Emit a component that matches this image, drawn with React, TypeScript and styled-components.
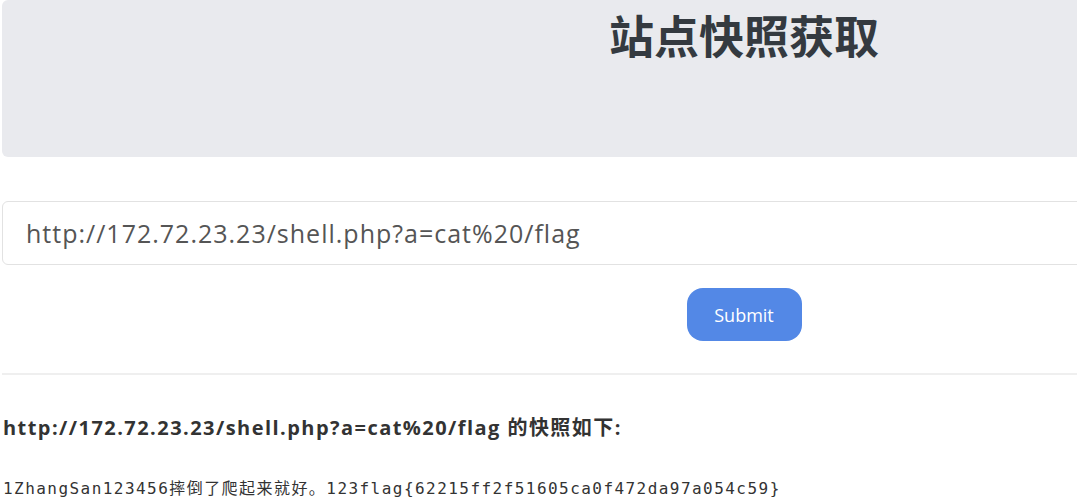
import React from "react";
import styled, { createGlobalStyle } from "styled-components";

const Global = createGlobalStyle`
  html, body { margin: 0; padding: 0; background: #ffffff; overflow: hidden; }
  body { font-family: "Open Sans", "Noto Sans CJK SC", sans-serif; color: #333; }
`;

const Viewport = styled.div`
  width: 1077px;
  overflow: hidden;
`;

const Container = styled.div`
  width: 1484px;
  margin-left: 2px;
  display: flex;
  flex-direction: column;
`;

const Jumbotron = styled.header`
  height: 157px;
  background: #e9eaee;
  border-radius: 6px;
  display: flex;
  justify-content: center;
  align-items: flex-start;
  box-sizing: border-box;
  padding-top: 5px;
`;

const Title = styled.h1`
  margin: 0;
  font-family: "Noto Sans CJK SC", sans-serif;
  font-weight: 700;
  font-size: 45px;
  line-height: 60px;
  color: #343a40;
`;

const Form = styled.form`
  margin-top: 44px;
  display: flex;
  flex-direction: column;
  align-items: center;
`;

const UrlInput = styled.input`
  width: 100%;
  height: 64px;
  box-sizing: border-box;
  border: 1px solid #e2e2e2;
  border-radius: 6px;
  padding: 0 0 0 23px;
  font-family: "Open Sans", sans-serif;
  font-size: 25px;
  letter-spacing: 1px;
  color: #555;
  background: #fff;
  outline: none;
`;

const SubmitButton = styled.button`
  margin-top: 23px;
  width: 115px;
  height: 53px;
  border: none;
  border-radius: 16px;
  background: #5388e6;
  color: #fff;
  font-family: "Open Sans", sans-serif;
  font-size: 18px;
`;

const Rule = styled.hr`
  margin: 32px 0 0;
  border: none;
  border-top: 2px solid #efefef;
  width: 100%;
`;

const ResultTitle = styled.h4`
  margin: 40px 0 0 1px;
  font-family: "Open Sans", "Noto Sans CJK SC", sans-serif;
  font-weight: 700;
  font-size: 20px;
  letter-spacing: 1.45px;
  line-height: 26px;
  color: #333;
`;

const Output = styled.pre`
  margin: 38px 0 0 1px;
  font-family: "DejaVu Sans Mono", "Noto Sans CJK SC", monospace;
  font-size: 16px;
  letter-spacing: 1.45px;
  line-height: 20px;
  color: #333;
`;

export default function App() {
  const url = "http://172.72.23.23/shell.php?a=cat%20/flag";
  return (
    <>
      <Global />
      <Viewport>
        <Container>
          <Jumbotron>
            <Title>站点快照获取</Title>
          </Jumbotron>
          <Form onSubmit={(e) => e.preventDefault()}>
            <UrlInput defaultValue={url} />
            <SubmitButton type="submit">Submit</SubmitButton>
          </Form>
          <Rule />
          <ResultTitle>{url} 的快照如下:</ResultTitle>
          <Output>1ZhangSan123456摔倒了爬起来就好。123flag{"{"}62215ff2f51605ca0f472da97a054c59{"}"}</Output>
        </Container>
      </Viewport>
    </>
  );
}
